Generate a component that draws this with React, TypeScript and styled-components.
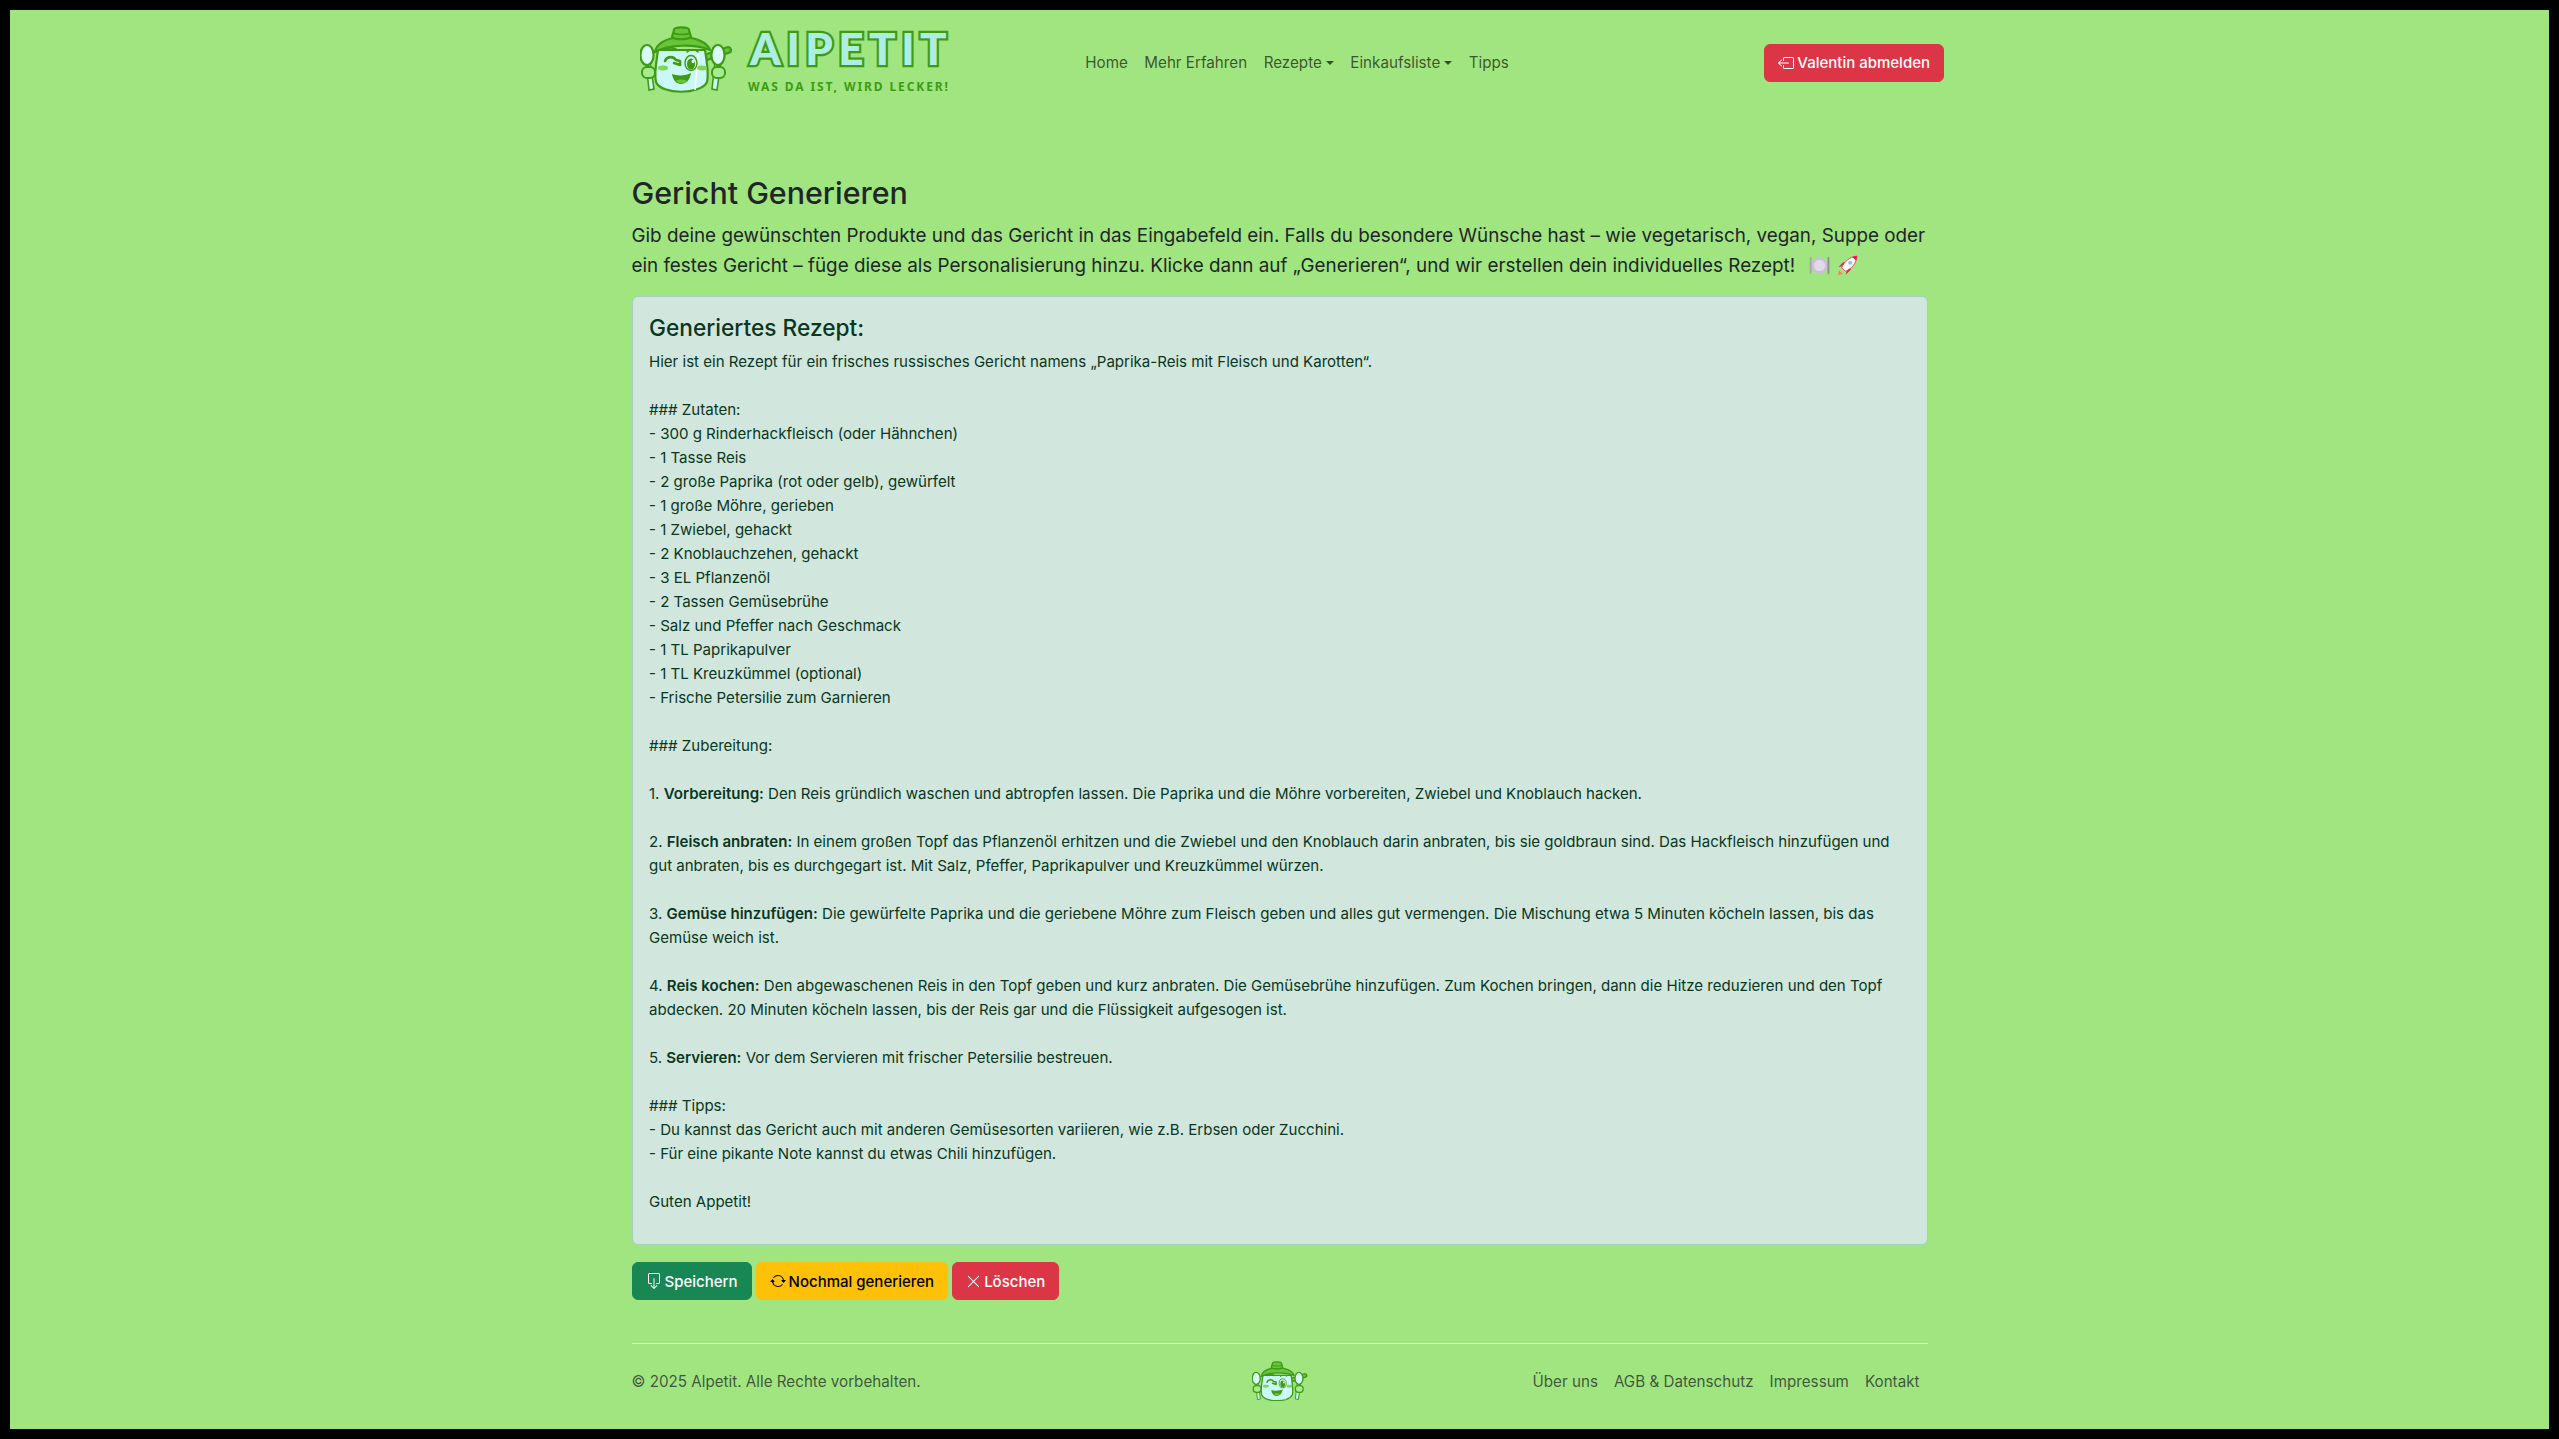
import React from "react";
import styled, { createGlobalStyle } from "styled-components";
import { BsBoxArrowLeft, BsBoxArrowDown, BsArrowRepeat, BsXLg } from "react-icons/bs";

const Global = createGlobalStyle`
  html, body { margin: 0; padding: 0; background: #000; }
  body { font-family: Inter, "Liberation Sans", sans-serif; color: #212529; }
  * { box-sizing: border-box; }
`;

const Frame = styled.div`
  width: 2559px;
  height: 1439px;
  padding: 10px;
  background: #000;
`;
const Page = styled.div`
  height: 100%;
  background: #a0e57f;
  display: flex;
  flex-direction: column;
`;
const NavBar = styled.nav`
  height: 105px;
  padding: 0 605px 0 630px;
  display: flex;
  align-items: center;
`;
const Brand = styled.a`
  width: 437px;
  display: flex;
  align-items: center;
  gap: 15px;
  margin-bottom: 5px;
`;
const BrandWords = styled.div`
  display: flex;
  flex-direction: column;
  margin-top: 1px;
`;
const BrandName = styled.span`
  font-family: Lato, sans-serif;
  font-weight: 900;
  font-size: 44px;
  line-height: 42px;
  letter-spacing: 5.5px;
  margin-left: 2px;
  color: #aeeee2;
  -webkit-text-stroke: 4.5px #3f9b14;
  paint-order: stroke fill;
`;
const BrandTag = styled.span`
  font-family: "Noto Sans", sans-serif;
  font-weight: 700;
  font-size: 12px;
  line-height: 16px;
  letter-spacing: 1.9px;
  color: #3f9b14;
  margin-top: 10px;
`;
const NavLinks = styled.div`
  flex: 1;
  display: flex;
`;
const NavLink = styled.a`
  padding: 0 8.25px;
  font-size: 15.2px;
  line-height: 24px;
  color: rgba(0, 0, 0, 0.65);
  display: flex;
  align-items: center;
`;
const Caret = styled.span`
  margin-left: 4px;
  border-top: 4px solid rgba(0, 0, 0, 0.65);
  border-left: 4px solid transparent;
  border-right: 4px solid transparent;
`;
const Button = styled.button<{ $bg: string; $fg?: string }>`
  height: 38px;
  padding: 0 13px;
  border: 1px solid ${(p) => p.$bg};
  border-radius: 6px;
  background: ${(p) => p.$bg};
  color: ${(p) => p.$fg ?? "#fff"};
  font-family: inherit;
  font-size: 15px;
  font-weight: 500;
  display: inline-flex;
  align-items: center;
  gap: 3px;
  white-space: nowrap;
`;
const Main = styled.main`
  width: 1296px;
  margin: 0 auto;
  flex: 1;
  display: flex;
  flex-direction: column;
  padding-top: 59px;
`;
const Title = styled.h1`
  margin: 0 0 9px;
  font-size: 30.4px;
  font-weight: 500;
  line-height: 38px;
`;
const Lead = styled.p`
  margin: 0 0 15px;
  font-size: 18.83px;
  line-height: 30px;
`;
const Emoji = styled.svg<{ $gap: number }>`
  width: 21px;
  height: 21px;
  vertical-align: -4px;
  margin-left: ${(p) => p.$gap}px;
`;
const RecipeCard = styled.section`
  height: 949px;
  padding: 16px 16px 16px 16.5px;
  border: 1px solid #a3cfbb;
  border-radius: 6px;
  background: #d1e7dd;
  color: #0a3622;
`;
const CardTitle = styled.h4`
  margin: 0 0 8px;
  font-size: 22.7px;
  font-weight: 500;
  line-height: 29px;
`;
const RecipeText = styled.div`
  white-space: pre-wrap;
  font-size: 15.05px;
  line-height: 24px;
  strong { font-weight: 600; }
`;
const Actions = styled.div`
  display: flex;
  gap: 4px;
  margin-top: 17px;
`;
const Rule = styled.hr`
  width: 100%;
  margin: 43px 0 0;
  border: 0;
  border-top: 1px solid rgba(255, 255, 255, 0.7);
`;
const Footer = styled.footer`
  display: grid;
  grid-template-columns: 1fr auto 1fr;
  align-items: center;
  height: 74px;
  color: rgba(33, 37, 41, 0.75);
  font-size: 15.2px;
`;
const FooterLinks = styled.div`
  display: flex;
  justify-content: flex-end;
  gap: 16px;
  padding-right: 8px;
`;

const G = "#3f9b14";
const Mascot = ({ width }: { width: number }) => (
  <svg width={width} viewBox="11 12 93 68" aria-hidden="true" style={{ flex: "none", display: "block" }}>
    <path d="M78 43 L99 36" stroke={G} strokeWidth="8" strokeLinecap="round" />
    <path d="M78 43 L99 36" stroke="#67c53a" strokeWidth="3.5" strokeLinecap="round" />
    <path d="M29 36 C27 50 25 60 27 68 C32 81 72 81 78 68 C80 60 78 48 76 36 Z" fill="#c9f8f6" stroke={G} strokeWidth="2.2" />
    <path d="M26 38 C28 28 40 24 52 23 C66 23 78 28 81 36 C66 30 40 30 26 38 Z" fill="#67c53a" stroke={G} strokeWidth="2.2" strokeLinejoin="round" />
    <path d="M45 16 C45 12.5 60 12.5 60 16 L62 23 C58 26 46 26 43 23 Z" fill="#67c53a" stroke={G} strokeWidth="2.2" />
    <path d="M44 19 C48 21 58 21 61 19" fill="none" stroke={G} strokeWidth="1.6" />
    <path d="M21 48 L25 75 L20 76 L17 48" fill="#c9f8f6" stroke={G} strokeWidth="1.6" />
    <ellipse cx="18" cy="41" rx="6.6" ry="10" fill="#d9fbf8" stroke={G} strokeWidth="2.2" />
    <rect x="13" y="53" width="13" height="11" rx="5" fill="#a6ea91" stroke={G} strokeWidth="2" />
    <path d="M86 48 L83 75 L88 76 L92 48" fill="#c9f8f6" stroke={G} strokeWidth="1.6" />
    <ellipse cx="89" cy="41" rx="6.6" ry="10" fill="#d9fbf8" stroke={G} strokeWidth="2.2" />
    <rect x="83" y="53" width="13" height="11" rx="5" fill="#a6ea91" stroke={G} strokeWidth="2" />
    <path d="M69 40 L66 76" stroke="#fff" strokeWidth="1.6" />
    <path d="M36 36 C39 33 45 33 48 36" fill="none" stroke={G} strokeWidth="2.2" strokeLinecap="round" />
    <path d="M58 38 C61 35 66 35 69 38" fill="none" stroke={G} strokeWidth="1.6" strokeLinecap="round" />
    <path d="M36 47 C38 42 44 42 47 46 L51 47 L51 51 L45 49" fill="none" stroke={G} strokeWidth="2.6" strokeLinecap="round" strokeLinejoin="round" />
    <ellipse cx="62" cy="49" rx="6" ry="7.5" fill="#c9f8f6" stroke={G} strokeWidth="1.4" />
    <ellipse cx="62" cy="50" rx="4" ry="5.6" fill={G} />
    <ellipse cx="64" cy="47.5" rx="1.4" ry="1.8" fill="#fff" />
    <ellipse cx="34" cy="54" rx="5" ry="2.4" fill="#7dd655" />
    <ellipse cx="73" cy="54" rx="5" ry="2.4" fill="#7dd655" />
    <path d="M43 60 C48 62 57 62 62 59 C61 66 57 70 52 70 C47 70 44 66 43 60 Z" fill={G} />
    <path d="M47 67 C49 65 55 65 58 67 C55 70 50 70 47 67 Z" fill="#67c53a" />
  </svg>
);

const Plate = () => (
  <Emoji $gap={14} viewBox="0 0 20 20" role="img" aria-label="🍽️">
    <circle cx="10" cy="10" r="7.6" fill="#c9bfd6" />
    <circle cx="10" cy="10" r="5.4" fill="#e2d8ea" />
    <rect x="0.6" y="2" width="1.8" height="16" rx="0.9" fill="#a7a6ac" />
    <rect x="17.6" y="2" width="1.8" height="16" rx="0.9" fill="#8f8e96" />
  </Emoji>
);
const Rocket = () => (
  <Emoji $gap={7} viewBox="0 0 20 20" role="img" aria-label="🚀">
    <path d="M1 19 L2 14.5 L5.5 18 Z" fill="#f4845f" />
    <path d="M4 11 L1.5 11.5 L6 7 L8 7 Z M9 16 L8.5 18.5 L13 14 L13 12 Z" fill="#e8164e" />
    <path d="M4.5 12 C7 6 12 2 19 1 C18.5 8 14 13 8 15.5 Z" fill="#fbfbfb" stroke="#e8164e" strokeWidth="0.7" />
    <path d="M14.5 1.7 C16 1.2 17.5 1.1 19 1 C18.9 2.6 18.6 4.1 18.1 5.5 Z" fill="#e8164e" />
    <circle cx="12.6" cy="7.4" r="1.9" fill="#8fc6e8" />
  </Emoji>
);

const recipeBefore = `Hier ist ein Rezept für ein frisches russisches Gericht namens „Paprika-Reis mit Fleisch und Karotten“.

### Zutaten:
- 300 g Rinderhackfleisch (oder Hähnchen)
- 1 Tasse Reis
- 2 große Paprika (rot oder gelb), gewürfelt
- 1 große Möhre, gerieben
- 1 Zwiebel, gehackt
- 2 Knoblauchzehen, gehackt
- 3 EL Pflanzenöl
- 2 Tassen Gemüsebrühe
- Salz und Pfeffer nach Geschmack
- 1 TL Paprikapulver
- 1 TL Kreuzkümmel (optional)
- Frische Petersilie zum Garnieren

### Zubereitung:

`;
const recipeAfter = `

### Tipps:
- Du kannst das Gericht auch mit anderen Gemüsesorten variieren, wie z.B. Erbsen oder Zucchini.
- Für eine pikante Note kannst du etwas Chili hinzufügen.

Guten Appetit!`;
const steps: [string, string, string][] = [
  ["1.", "Vorbereitung:", "Den Reis gründlich waschen und abtropfen lassen. Die Paprika und die Möhre vorbereiten, Zwiebel und Knoblauch hacken."],
  ["2.", "Fleisch anbraten:", "In einem großen Topf das Pflanzenöl erhitzen und die Zwiebel und den Knoblauch darin anbraten, bis sie goldbraun sind. Das Hackfleisch hinzufügen und gut anbraten, bis es durchgegart ist. Mit Salz, Pfeffer, Paprikapulver und Kreuzkümmel würzen."],
  ["3.", "Gemüse hinzufügen:", "Die gewürfelte Paprika und die geriebene Möhre zum Fleisch geben und alles gut vermengen. Die Mischung etwa 5 Minuten köcheln lassen, bis das Gemüse weich ist."],
  ["4.", "Reis kochen:", "Den abgewaschenen Reis in den Topf geben und kurz anbraten. Die Gemüsebrühe hinzufügen. Zum Kochen bringen, dann die Hitze reduzieren und den Topf abdecken. 20 Minuten köcheln lassen, bis der Reis gar und die Flüssigkeit aufgesogen ist."],
  ["5.", "Servieren:", "Vor dem Servieren mit frischer Petersilie bestreuen."],
];

export default function App() {
  return (
    <Frame>
      <Global />
      <Page>
        <NavBar>
          <Brand>
            <Mascot width={93} />
            <BrandWords>
              <BrandName>AIPETIT</BrandName>
              <BrandTag>WAS DA IST, WIRD LECKER!</BrandTag>
            </BrandWords>
          </Brand>
          <NavLinks>
            <NavLink>Home</NavLink>
            <NavLink>Mehr Erfahren</NavLink>
            <NavLink>Rezepte<Caret /></NavLink>
            <NavLink>Einkaufsliste<Caret /></NavLink>
            <NavLink>Tipps</NavLink>
          </NavLinks>
          <Button $bg="#dc3545"><BsBoxArrowLeft size={16} />Valentin abmelden</Button>
        </NavBar>
        <Main>
          <Title>Gericht Generieren</Title>
          <Lead>
            Gib deine gewünschten Produkte und das Gericht in das Eingabefeld ein. Falls du besondere Wünsche hast – wie vegetarisch, vegan, Suppe oder ein festes Gericht – füge diese als Personalisierung hinzu. Klicke dann auf „Generieren“, und wir erstellen dein individuelles Rezept!
            <Plate /><Rocket />
          </Lead>
          <RecipeCard>
            <CardTitle>Generiertes Rezept:</CardTitle>
            <RecipeText>
              {recipeBefore}
              {steps.map(([n, head, body], i) => (
                <React.Fragment key={n}>
                  {i > 0 ? "\n\n" : ""}
                  {n} <strong>{head}</strong> {body}
                </React.Fragment>
              ))}
              {recipeAfter}
            </RecipeText>
          </RecipeCard>
          <Actions>
            <Button $bg="#198754"><BsBoxArrowDown size={16} />Speichern</Button>
            <Button $bg="#ffc107" $fg="#000"><BsArrowRepeat size={16} />Nochmal generieren</Button>
            <Button $bg="#dc3545"><BsXLg size={15} />Löschen</Button>
          </Actions>
          <Rule />
          <Footer>
            <span>© 2025 Alpetit. Alle Rechte vorbehalten.</span>
            <Mascot width={56} />
            <FooterLinks>
              <span>Über uns</span>
              <span>AGB &amp; Datenschutz</span>
              <span>Impressum</span>
              <span>Kontakt</span>
            </FooterLinks>
          </Footer>
        </Main>
      </Page>
    </Frame>
  );
}
